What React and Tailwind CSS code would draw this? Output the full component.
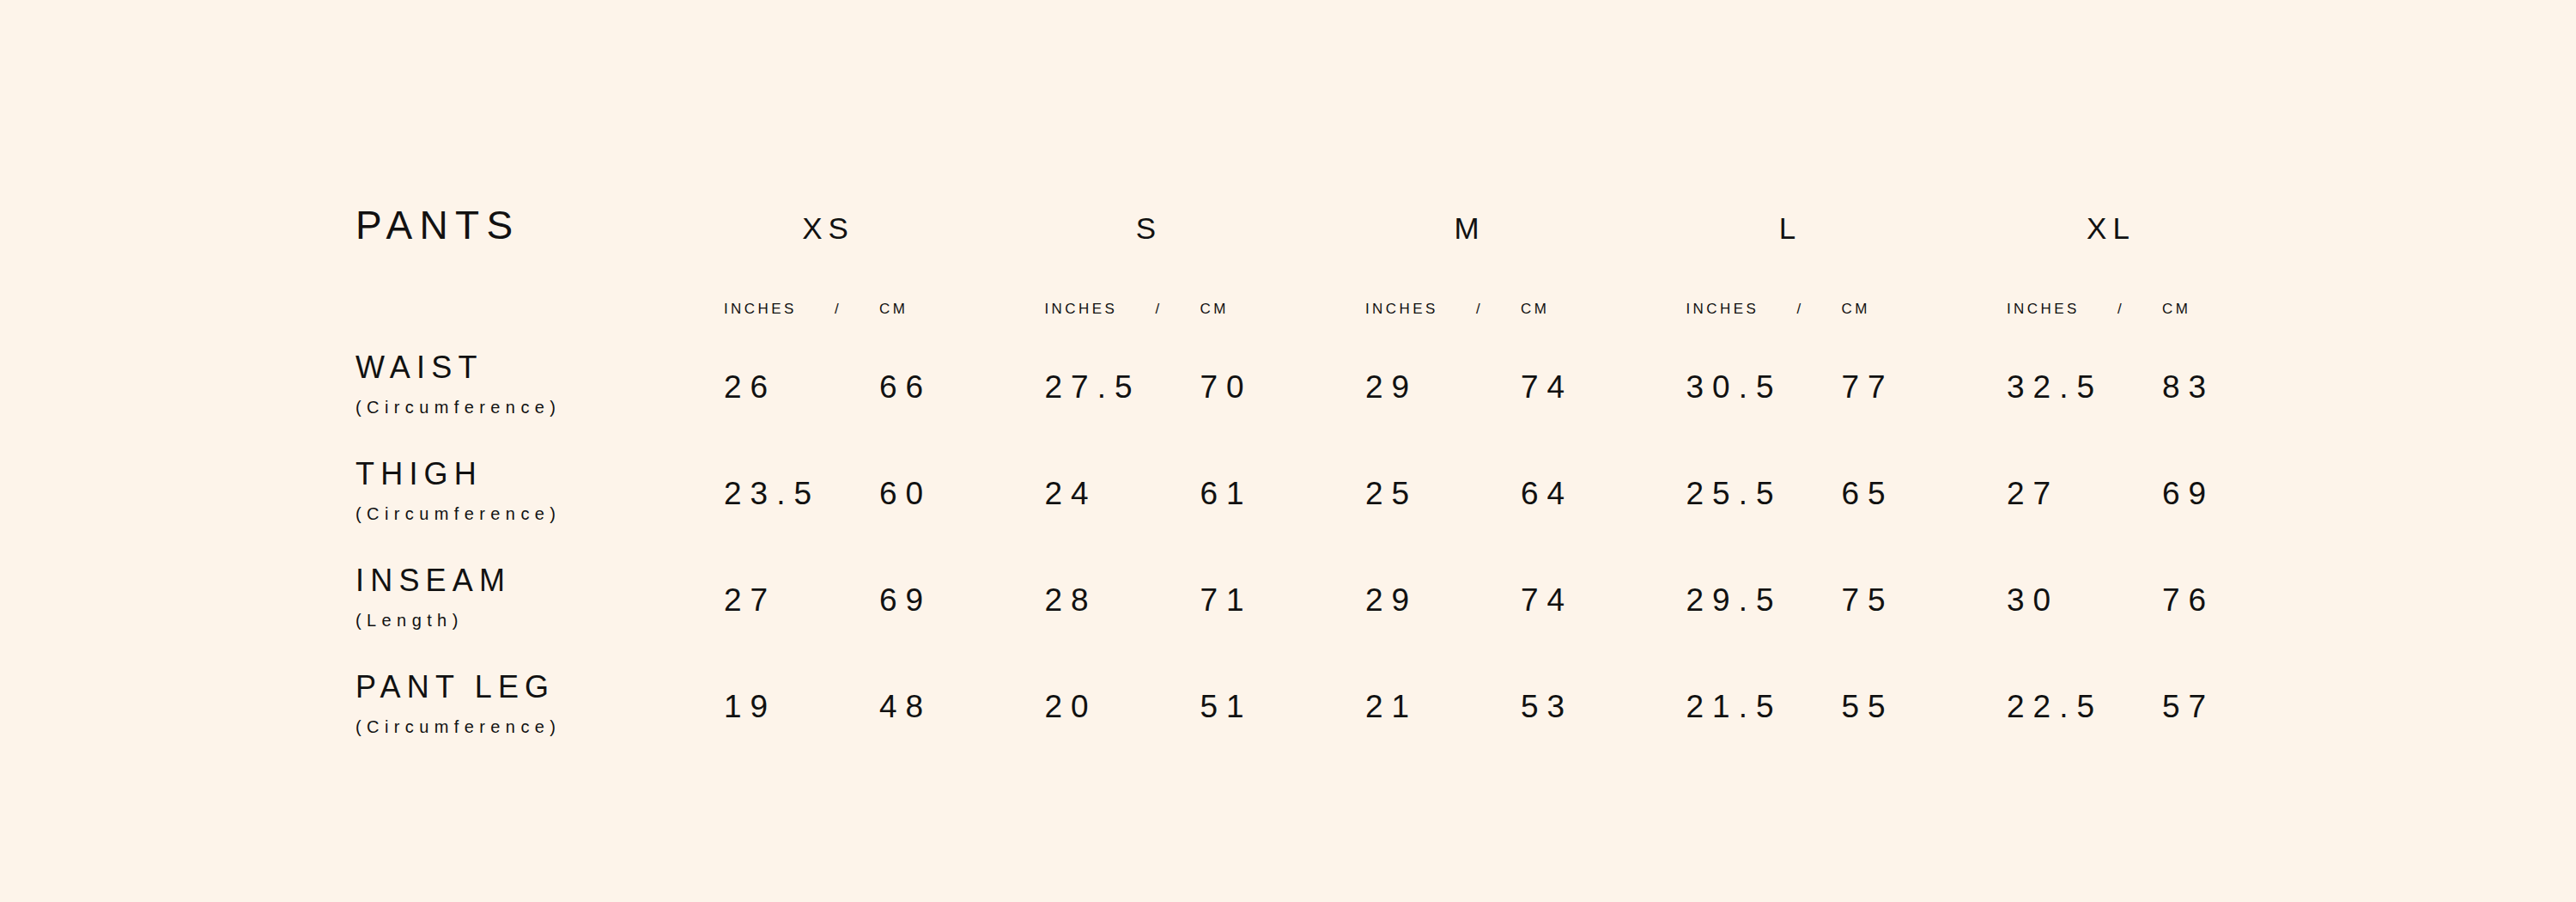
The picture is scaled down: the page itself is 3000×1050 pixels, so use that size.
import React from 'react';

const sizes = ['XS', 'S', 'M', 'L', 'XL'];

const measurements = [
  {
    label: 'WAIST',
    note: '(Circumference)',
    values: [['26', '66'], ['27.5', '70'], ['29', '74'], ['30.5', '77'], ['32.5', '83']],
  },
  {
    label: 'THIGH',
    note: '(Circumference)',
    values: [['23.5', '60'], ['24', '61'], ['25', '64'], ['25.5', '65'], ['27', '69']],
  },
  {
    label: 'INSEAM',
    note: '(Length)',
    values: [['27', '69'], ['28', '71'], ['29', '74'], ['29.5', '75'], ['30', '76']],
  },
  {
    label: 'PANT LEG',
    note: '(Circumference)',
    values: [['19', '48'], ['20', '51'], ['21', '53'], ['21.5', '55'], ['22.5', '57']],
  },
];

const App = () => {
  return (
    <div className="min-h-[1050px] w-full bg-[#fdf4ea] text-[#111111] font-['Liberation_Sans',Arial,sans-serif]">
      <div className="pl-[414px] pt-[239px]">
        {/* Header */}
        <div className="flex items-baseline">
          <div className="w-[429px] text-[46px] leading-none tracking-[0.18em]">PANTS</div>
          {sizes.map((size) => (
            <div key={size} className="w-[373.5px]">
              <div className="w-[236px] text-center text-[35px] leading-none tracking-[0.2em] pl-[0.2em]">
                {size}
              </div>
            </div>
          ))}
        </div>

        {/* Units */}
        <div className="flex mt-[66px]">
          <div className="w-[429px]" />
          {sizes.map((size) => (
            <div key={size} className="w-[373.5px] flex text-[17px] leading-none tracking-[0.2em]">
              <span className="w-[129px]">INCHES</span>
              <span className="w-[52px]">/</span>
              <span>CM</span>
            </div>
          ))}
        </div>

        {/* Rows */}
        <div className="mt-[42px] flex flex-col gap-[50px]">
          {measurements.map((row) => (
            <div key={row.label} className="flex items-start">
              <div className="w-[429px]">
                <div className="text-[36px] leading-none tracking-[0.2em]">{row.label}</div>
                <div className="mt-[18px] text-[20px] leading-none tracking-[0.32em]">{row.note}</div>
              </div>
              {row.values.map(([inch, cm], i) => (
                <div key={i} className="w-[373.5px] pt-[22px] flex text-[37px] leading-none tracking-[0.27em]">
                  <span className="w-[181px]">{inch}</span>
                  <span>{cm}</span>
                </div>
              ))}
            </div>
          ))}
        </div>
      </div>
    </div>
  );
};

export default App;
